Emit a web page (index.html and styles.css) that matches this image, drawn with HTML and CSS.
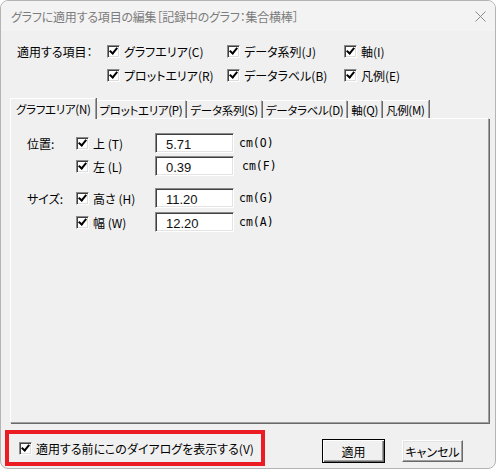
FILE: index.html
```html
<!DOCTYPE html>
<html lang="ja">
<head>
  <meta charset="UTF-8" />
  <meta name="viewport" content="width=device-width, initial-scale=1.0"/>
  <title>グラフに適用する項目の編集</title>
  <link rel="stylesheet" href="styles.css">
</head>
<body>

  <div class="window">
    <!-- タイトルバー -->
    <div class="titlebar">
      <span class="title">グラフに適用する項目の編集［記録中のグラフ：集合横棒］</span>
      <span class="close">
        <svg width="11" height="11" viewBox="0 0 11 11"><path d="M0.5 0.5 L10.5 10.5 M10.5 0.5 L0.5 10.5" stroke="#8a8a8a" stroke-width="1" fill="none"/></svg>
      </span>
    </div>

    <!-- 適用する項目 -->
    <div class="targets">
      <span class="targets-label">適用する項目：</span>
      <label class="check"><span class="box"></span>グラフエリア(C)</label>
      <label class="check"><span class="box"></span>データ系列(J)</label>
      <label class="check"><span class="box"></span>軸(I)</label>
      <span></span>
      <label class="check"><span class="box"></span>プロットエリア(R)</label>
      <label class="check"><span class="box"></span>データラベル(B)</label>
      <label class="check"><span class="box"></span>凡例(E)</label>
    </div>

    <!-- タブ -->
    <div class="tabs">
      <span class="tab active">グラフエリア(N)</span>
      <span class="tab">プロットエリア(P)</span>
      <span class="tab">データ系列(S)</span>
      <span class="tab">データラベル(D)</span>
      <span class="tab">軸(Q)</span>
      <span class="tab">凡例(M)</span>
    </div>

    <div class="panel">
      <div class="group">
        <span class="group-label">位置:</span>
        <label class="check"><span class="box"></span>上 (T)</label>
        <input class="num" type="text" value="5.71" readonly>
        <span class="unit">cm(O)</span>
        <label class="check"><span class="box"></span>左 (L)</label>
        <input class="num" type="text" value="0.39" readonly>
        <span class="unit shift">cm(F)</span>
      </div>
      <div class="group size">
        <span class="group-label">サイズ:</span>
        <label class="check"><span class="box"></span>高さ (H)</label>
        <input class="num" type="text" value="11.20" readonly>
        <span class="unit">cm(G)</span>
        <label class="check"><span class="box"></span>幅 (W)</label>
        <input class="num" type="text" value="12.20" readonly>
        <span class="unit">cm(A)</span>
      </div>
    </div>

    <!-- 下部ボタン -->
    <div class="footer">
      <div class="confirm">
        <label class="check"><span class="box"></span>適用する前にこのダイアログを表示する(V)</label>
      </div>
      <button class="btn default">適用</button>
      <button class="btn cancel">キャンセル</button>
    </div>
  </div>

</body>
</html>
```

FILE: styles.css
```css
body {
  margin: 0;
  background-color: #fff;
  font-family: "Noto Sans CJK JP", sans-serif;
  font-size: 12px;
  font-feature-settings: "palt";
  color: #000;
}

.window {
  width: 496px;
  height: 469px;
  box-sizing: border-box;
  border: 1px solid #b4b4b4;
  border-radius: 8px;
  background-color: #f0f0f0;
  overflow: hidden;
}

.titlebar {
  height: 30px;
  display: flex;
  align-items: center;
  justify-content: space-between;
  padding: 0 9px 0 10px;
  background-color: #f3f3f3;
  color: #7c7c7c;
}

.title {
  letter-spacing: -0.2px;
}

.close {
  display: flex;
}

/* チェックボックス */
.check {
  display: flex;
  align-items: center;
  white-space: nowrap;
}

.box {
  position: relative;
  width: 13px;
  height: 13px;
  box-sizing: border-box;
  margin-right: 4px;
  border: 1px solid;
  border-color: #8a8a8a #fff #fff #8a8a8a;
  box-shadow: inset 1px 1px 0 #404040, inset -1px -1px 0 #dcdcdc;
  background-color: #fff;
  flex: none;
}

.box::after {
  content: "";
  position: absolute;
  left: 3px;
  top: 0px;
  width: 3px;
  height: 6px;
  border: solid #000;
  border-width: 0 2px 2px 0;
  transform: rotate(40deg);
}

.targets {
  display: grid;
  grid-template-columns: 90px 120px 117px auto;
  grid-auto-rows: 24px;
  align-items: center;
  margin-top: 8px;
  padding-left: 16px;
}

/* タブ */
.tabs {
  display: flex;
  align-items: flex-start;
  height: 20px;
  margin-top: 11px;
  padding-left: 9px;
  font-size: 11.5px;
  letter-spacing: -0.3px;
}

.tab {
  height: 18px;
  margin-top: 2px;
  padding: 0 3px 0 4px;
  display: flex;
  align-items: center;
  border-top: 1px solid #fff;
  border-right: 1px solid #a0a0a0;
  box-shadow: 1px 0 0 #696969;
  box-sizing: border-box;
  white-space: nowrap;
}

.tab.active {
  position: relative;
  z-index: 1;
  height: 21px;
  margin-top: 0;
  padding: 0 4px 0 5px;
  border-left: 1px solid #fff;
  background-color: #f0f0f0;
}

.panel {
  height: 305px;
  box-sizing: border-box;
  margin: 0 6px 0 9px;
  padding: 14px 0 0 16px;
  border: 1px solid;
  border-color: #fff #a0a0a0 #a0a0a0 #fff;
  box-shadow: 1px 1px 0 #696969;
}

.group {
  display: grid;
  grid-template-columns: 49px 79px 84px auto;
  grid-auto-rows: 20px;
  row-gap: 3px;
  align-items: center;
}

.group.size {
  margin-top: 12px;
  row-gap: 4px;
}

.group-label {
  grid-column: 1;
}

.group .check {
  grid-column: 2;
}

.num {
  width: 79px;
  height: 20px;
  box-sizing: border-box;
  margin: 0;
  padding: 2px 0 0 10px;
  border: 1px solid;
  border-color: #8a8a8a #fff #fff #8a8a8a;
  box-shadow: inset 1px 1px 0 #404040, inset -1px -1px 0 #e3e3e3;
  background-color: #fff;
  font-family: "Liberation Sans", sans-serif;
  font-size: 13px;
  color: #111;
  outline: none;
}

.unit {
  font-family: "DejaVu Sans Mono", monospace;
  font-size: 11.5px;
}

.unit.shift {
  padding-left: 3px;
}

/* フッター */
.footer {
  display: flex;
  align-items: flex-end;
  margin-top: 7px;
  padding-left: 4px;
}

.confirm {
  width: 260px;
  height: 36px;
  box-sizing: border-box;
  display: flex;
  align-items: center;
  padding-left: 10px;
  border: 4px solid #ec1c24;
}

.btn {
  height: 22px;
  width: 61px;
  margin: 0 0 4px 17px;
  padding: 0;
  font: inherit;
  color: #000;
  background-color: #f0f0f0;
  border: 1px solid;
  border-color: #fff #696969 #696969 #fff;
  box-shadow: inset -1px -1px 0 #a0a0a0, inset 1px 1px 0 #e3e3e3;
}

.btn.default {
  width: 63px;
  height: 24px;
  margin: 0 0 3px 57px;
  border-color: #000;
  box-shadow: inset 1px 1px 0 #fff, inset -1px -1px 0 #696969, inset -2px -2px 0 #a0a0a0;
}
```
